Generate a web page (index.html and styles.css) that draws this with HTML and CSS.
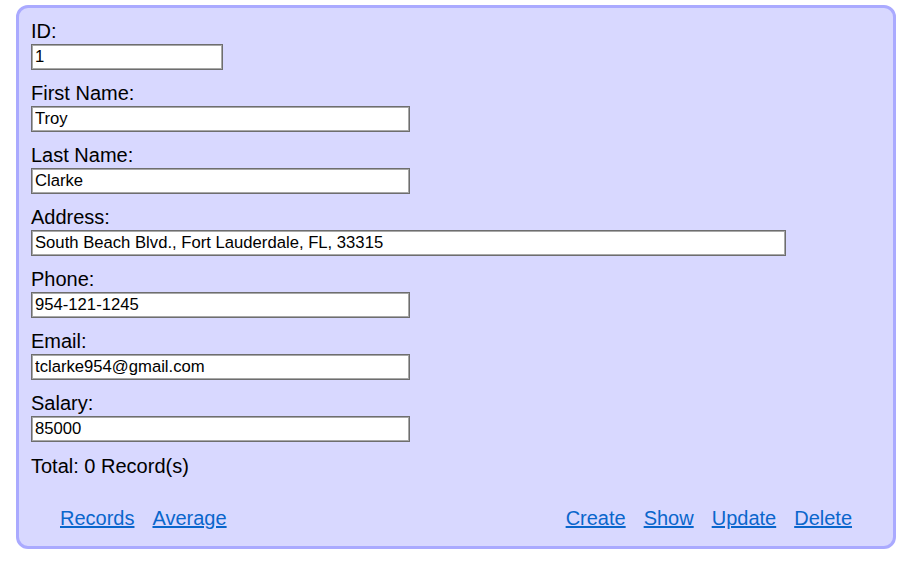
FILE: index.html
```html
<!DOCTYPE html>
<html>
<head>
<meta charset="utf-8">
<link rel="stylesheet" href="styles.css">
</head>
<body>
<div class="panel">
  <div class="field">
    <label class="label">ID:</label>
    <input class="input input-short" type="text" value="1">
  </div>
  <div class="field">
    <label class="label">First Name:</label>
    <input class="input" type="text" value="Troy">
  </div>
  <div class="field">
    <label class="label">Last Name:</label>
    <input class="input" type="text" value="Clarke">
  </div>
  <div class="field">
    <label class="label">Address:</label>
    <input class="input input-long" type="text" value="South Beach Blvd., Fort Lauderdale, FL, 33315">
  </div>
  <div class="field">
    <label class="label">Phone:</label>
    <input class="input" type="text" value="954-121-1245">
  </div>
  <div class="field">
    <label class="label">Email:</label>
    <input class="input" type="text" value="tclarke954@gmail.com">
  </div>
  <div class="field">
    <label class="label">Salary:</label>
    <input class="input" type="text" value="85000">
  </div>
  <div class="total">Total: 0 Record(s)</div>
  <div class="actions">
    <div class="group">
      <a class="link" href="#">Records</a>
      <a class="link" href="#">Average</a>
    </div>
    <div class="group">
      <a class="link" href="#">Create</a>
      <a class="link" href="#">Show</a>
      <a class="link" href="#">Update</a>
      <a class="link" href="#">Delete</a>
    </div>
  </div>
</div>
</body>
</html>
```
FILE: styles.css
```css
html, body {
  margin: 0;
  padding: 0;
  background: #ffffff;
}
body {
  padding: 5px 14px 0 16px;
  font-family: "Liberation Sans", Arial, sans-serif;
  color: #000;
}
.panel {
  box-sizing: border-box;
  width: 880px;
  height: 544px;
  border: 3px solid #aaaaff;
  border-radius: 12px;
  background: #d8d8ff;
  padding: 12px 12px 15px 12px;
  display: flex;
  flex-direction: column;
}
.field {
  display: flex;
  flex-direction: column;
  align-items: flex-start;
  margin-bottom: 12px;
}
.label {
  font-size: 20px;
  line-height: 23px;
  margin-bottom: 1px;
}
.input {
  box-sizing: border-box;
  width: 379px;
  height: 26px;
  margin: 0;
  padding: 0 3px;
  border: 1px solid #6e6e6e;
  box-shadow: inset 0 0 0 1px #a8a8a8;
  background: #fff;
  font-family: "Liberation Sans", Arial, sans-serif;
  font-size: 16.67px;
  color: #000;
  outline: none;
}
.input-short { width: 192px; }
.input-long { width: 755px; }
.total {
  font-size: 20px;
  line-height: 23px;
  margin-top: 1px;
}
.actions {
  margin-top: 29px;
  display: flex;
  justify-content: space-between;
  padding: 0 20px 0 20px;
}
.group {
  display: flex;
}
.link {
  font-size: 20px;
  line-height: 23px;
  color: #0a66cc;
  text-decoration: underline;
  margin: 0 9px;
}
```
